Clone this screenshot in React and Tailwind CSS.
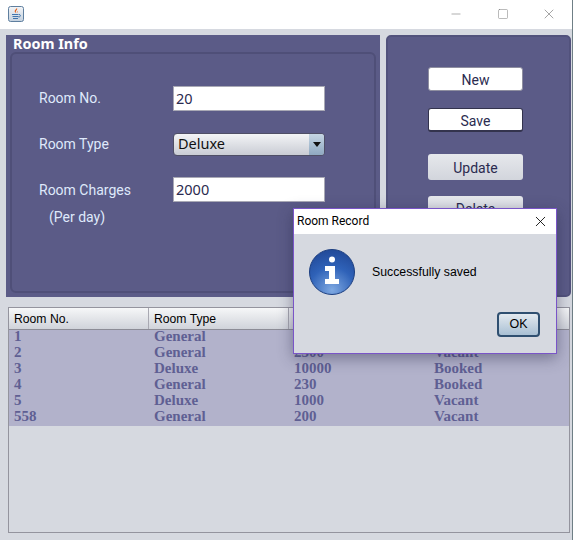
import React from 'react';
import { Minus, Square, X } from 'lucide-react';

const rows = [
  ['1', 'General', '2000', 'Vacant'],
  ['2', 'General', '2500', 'Vacant'],
  ['3', 'Deluxe', '10000', 'Booked'],
  ['4', 'General', '230', 'Booked'],
  ['5', 'Deluxe', '1000', 'Vacant'],
  ['558', 'General', '200', 'Vacant'],
];

const solidBtn = 'w-[95px] flex items-center justify-center rounded-[3px] text-[14px] text-[#2b2b4f]';

function JavaIcon() {
  return (
    <svg width="16" height="16" viewBox="0 0 16 16">
      <defs>
        <linearGradient id="javaBg" x1="0" y1="0" x2="0" y2="1">
          <stop offset="0%" stopColor="#f4f5f7" />
          <stop offset="100%" stopColor="#c3d0de" />
        </linearGradient>
      </defs>
      <rect x="0.5" y="0.5" width="15" height="15" rx="2" fill="url(#javaBg)" stroke="#5f7f9f" />
      <path d="M9 2c1 2-2 2.500-1 5-2.500-1.500-1-3 1-5zM10 5c0 1-1 1.200-.8 2-1-.8-.2-1.500.8-2z" fill="#e2601a" />
      <path d="M4 8.500h6.500M4.500 10.500h6M5 12.500h5" stroke="#3f74ad" strokeWidth="1" fill="none" />
      <path d="M11 8.500c2 0 2 2.500-.5 2.500" stroke="#3f74ad" strokeWidth="1" fill="none" />
    </svg>
  );
}

function InfoIcon() {
  return (
    <svg width="46" height="46" viewBox="0 0 46 46">
      <defs>
        <radialGradient id="infoFill" cx="50%" cy="90%" r="85%">
          <stop offset="0%" stopColor="#7fa9e2" />
          <stop offset="60%" stopColor="#2f62b8" />
          <stop offset="100%" stopColor="#234c9c" />
        </radialGradient>
      </defs>
      <circle cx="23" cy="23" r="22.5" fill="url(#infoFill)" stroke="#1d3f80" />
      <circle cx="23" cy="10.5" r="3" fill="#fff" />
      <path d="M16 17h10v13h4v5H16v-5h4v-8h-4z" fill="#fff" />
    </svg>
  );
}

export default function App() {
  return (
    <div className="relative w-[573px] h-[540px] overflow-hidden bg-[#d6d9e0] font-['Roboto',sans-serif]">
      <div className="h-[29px] w-[572px] bg-white flex items-center pl-[8px] pb-[1px]">
        <JavaIcon />
        <div className="ml-auto flex items-center text-[#777]">
          <div className="w-[46px] flex justify-center pr-[3px]"><Minus size={14} strokeWidth={1} /></div>
          <div className="w-[46px] flex justify-center"><Square size={12} strokeWidth={1} /></div>
          <div className="w-[46px] flex justify-center"><X size={16} strokeWidth={1} /></div>
        </div>
      </div>

      <div className="flex h-[262px] mt-[6px] ml-[6px] gap-[6px]">
        <div className="w-[374px] bg-[#5b5b87] px-[4px] pb-[4px] flex flex-col">
          <div className="h-[17px] pl-[3px] text-[14.4px] leading-[17px] font-bold text-white font-['Noto_Sans',sans-serif]">Room Info</div>
          <div className="flex-1 rounded-[6px] border-2 border-[#4f4f78] pt-[31px] pl-[27px] text-[14px] text-[#dfe9fb]">
            <div className="flex items-center h-[26px]">
              <span className="w-[134px]">Room No.</span>
              <div className="w-[152px] h-[25px] bg-white border border-[#a9a9b5] pl-[2px] text-[#2b2b4f] leading-[23px] text-[14.5px] font-['Noto_Sans',sans-serif]">20</div>
            </div>
            <div className="flex items-center h-[24px] mt-[21px]">
              <span className="w-[134px]">Room Type</span>
              <div className="w-[152px] h-[23px] rounded-[4px] border border-[#4f4f66] bg-gradient-to-b from-[#f3f4f6] to-[#c9ccd4] flex items-center pl-[4px] text-[#111] text-[14.5px] font-['Noto_Sans',sans-serif]">
                Deluxe
                <div className="ml-auto w-[15px] h-full rounded-r-[3px] bg-gradient-to-b from-[#c5d5e3] to-[#8fa9c1] flex items-center justify-center">
                  <div className="w-0 h-0 border-x-[4px] border-x-transparent border-t-[5px] border-t-[#111]" />
                </div>
              </div>
            </div>
            <div className="flex items-center h-[25px] mt-[21px]">
              <span className="w-[134px] pt-[2px]">Room Charges</span>
              <div className="w-[152px] h-[25px] bg-white border border-[#a9a9b5] pl-[2px] text-[#2b2b4f] leading-[23px] text-[14.5px] font-['Noto_Sans',sans-serif]">2000</div>
            </div>
            <div className="pl-[10px] mt-[3px] leading-[24px]">(Per day)</div>
          </div>
        </div>

        <div className="w-[185px] rounded-[5px] bg-[#5b5b87] border-2 border-[#52527c] flex flex-col pt-[30px] pl-[40px]">
          <div className={`${solidBtn} h-[24px] pt-[2px] bg-white border border-[#8f8fa0]`}>New</div>
          <div className={`${solidBtn} h-[24px] mt-[17px] pt-[3px] bg-white border border-[#33334d] border-b-2`}>Save</div>
          <div className={`${solidBtn} h-[26px] mt-[22px] pt-[2px] bg-gradient-to-b from-[#e6e8ec] to-[#d2d5dc]`}>Update</div>
          <div className={`${solidBtn} h-[26px] mt-[16px] bg-gradient-to-b from-[#e6e8ec] to-[#d2d5dc]`}>Delete</div>
        </div>
      </div>

      <div className="mt-[10px] ml-[8px] w-[562px] h-[226px] border border-[#94949e]">
        <div className="flex h-[22px] border-b border-[#8c8c96] bg-gradient-to-b from-[#f6f7f8] to-[#d0d3da] text-[12.2px] text-black font-['Liberation_Sans',sans-serif]">
          {['Room No.', 'Room Type', 'Charges', 'Status'].map((h, i) => (
            <div key={h} className={`w-[140px] pl-[5px] leading-[22px] ${i < 3 ? 'border-r border-[#a9a9b2]' : ''}`}>{h}</div>
          ))}
        </div>
        <div className="bg-[#b2b2cb]">
          {rows.map((row) => (
            <div key={row[0]} className="flex h-[16px] text-[15px] leading-[12px] font-bold text-[#5f5f93] font-['Liberation_Serif',serif]">
              {row.map((cell, i) => (
                <div key={i} className="w-[140px] pl-[5px]">{cell}</div>
              ))}
            </div>
          ))}
        </div>
      </div>

      <div className="absolute left-[572px] top-0 w-[1px] h-[540px] bg-[#6f7f86]" />

      <div className="absolute left-[293px] top-[208px] w-[264px] h-[146px] border border-[#7a55c8] bg-[#d6d9e0] shadow-[0_4px_14px_rgba(40,40,70,0.45)]">
        <div className="h-[25px] bg-white flex items-center pl-[3px] pb-[1px] text-[12px] text-black font-['Roboto',sans-serif]">
          Room Record
          <X size={17} strokeWidth={1.2} className="ml-auto mr-[7px]" />
        </div>
        <div className="flex pl-[15px] pt-[15px]">
          <InfoIcon />
          <span className="ml-[17px] mt-[15px] text-[12.3px] leading-[16px] text-black font-['Liberation_Sans',sans-serif]">Successfully saved</span>
        </div>
        <div className="absolute right-[16px] bottom-[16px] w-[43px] h-[25px] rounded-[4px] border-2 border-[#2f4f70] bg-gradient-to-b from-[#e3e9ef] to-[#a9c0d4] flex items-center justify-center text-[12.5px] text-black font-['Liberation_Sans',sans-serif]">OK</div>
      </div>
    </div>
  );
}
